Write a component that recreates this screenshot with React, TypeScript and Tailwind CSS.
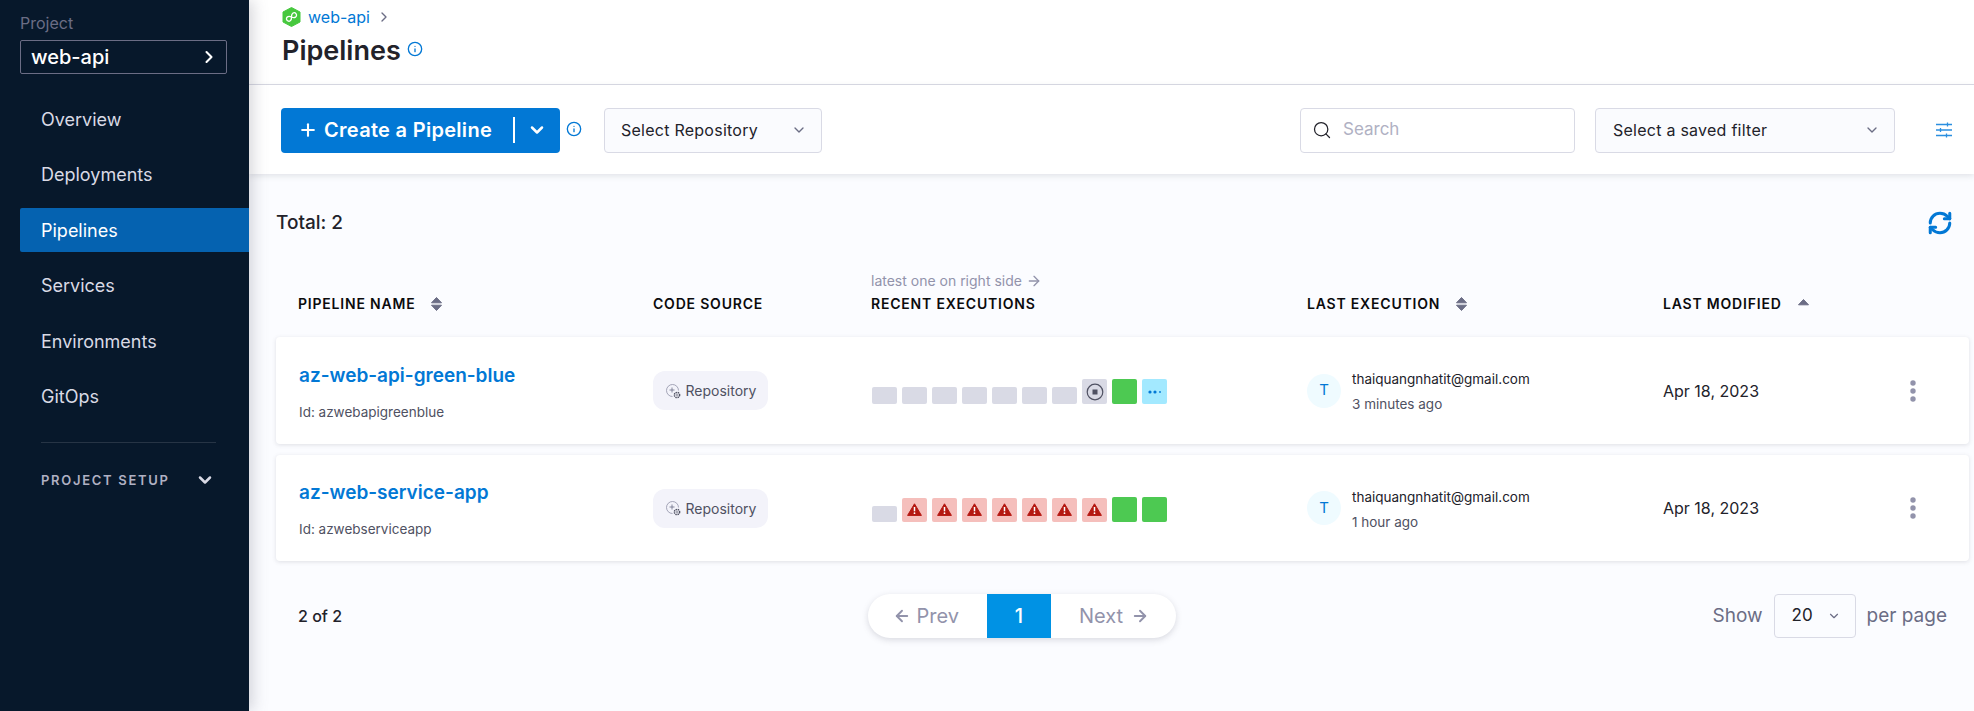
import { ArrowLeft, ArrowRight, ChevronDown, ChevronRight, Info, Plus, RefreshCw, Search } from "lucide-react";

const columns = "grid grid-cols-[377px_218px_436px_356px_238px_1fr] items-center";

const navItems = ["Overview", "Deployments", "Pipelines", "Services", "Environments", "GitOps"];

const SortIcon = ({ up = false }: { up?: boolean }) => (
  <svg width="13" height="16" viewBox="0 0 13 16" className={up ? "mt-[4px] shrink-0" : "shrink-0"}>
    <path d="M6.5 1.5 11.5 6.8H1.5Z" fill="#6b6d85" stroke="#6b6d85" strokeLinejoin="round" />
    {!up && <path d="M6.5 14.5 1.5 9.2H11.5Z" fill="#6b6d85" stroke="#6b6d85" strokeLinejoin="round" />}
  </svg>
);

const ProjectLogo = () => (
  <svg width="19" height="20" viewBox="0 0 19 20">
    <path d="M9.5 0.5 18 5v10l-8.5 4.5L1 15V5Z" fill="#47c83e" stroke="#47c83e" strokeLinejoin="round" />
    <path
      d="M9.5 10c-1-1.6-2-2.4-3.2-2.4a2.4 2.4 0 0 0 0 4.8c1.2 0 2.2-.8 3.2-2.4s2-2.4 3.2-2.4a2.4 2.4 0 0 1 0 4.8c-1.2 0-2.2-.8-3.2-2.4Z"
      fill="none"
      stroke="#fff"
      strokeWidth="1.3"
      transform="rotate(-35 9.5 10)"
    />
  </svg>
);

const RepoIcon = () => (
  <svg width="16" height="16" viewBox="0 0 16 16" className="shrink-0">
    <path d="M13.5 7.5A6 6 0 1 0 7.5 13.5" fill="none" stroke="#8f90a6" strokeWidth="0.8" />
    <path d="M7 4.5v5M4.5 7h5" stroke="#6b6d85" strokeWidth="0.8" />
    <circle cx="12" cy="12" r="2.6" fill="none" stroke="#4f5162" strokeWidth="1.5" strokeDasharray="1.4 0.7" />
    <circle cx="12" cy="12" r="0.8" fill="#4f5162" />
  </svg>
);

const FilterIcon = () => (
  <svg width="18" height="18" viewBox="0 0 18 18" stroke="#2b8fe0" strokeWidth="1.3">
    <path d="M1 3.5h16M1 9h16M1 14.5h16" />
    <path d="M12.5 1.5v4M5.5 7v4M11.5 12.5v4" />
  </svg>
);

const KebabIcon = () => (
  <svg width="6" height="22" viewBox="0 0 6 22" fill="#9293ab">
    <circle cx="3" cy="3" r="2.7" />
    <circle cx="3" cy="11" r="2.7" />
    <circle cx="3" cy="19" r="2.7" />
  </svg>
);

const WarnIcon = () => (
  <svg width="15" height="13" viewBox="0 0 15 13">
    <path d="M7.5 0.8 14.4 12.4H0.6Z" fill="#b41710" stroke="#b41710" strokeLinejoin="round" />
    <path d="M7.5 4v4.3" stroke="#fff" strokeWidth="1.5" />
    <circle cx="7.5" cy="10.2" r="0.9" fill="#fff" />
  </svg>
);

const Chip = ({ kind }: { kind: string }) => {
  if (kind === "empty") return <div className="h-[17px] w-[25px] rounded-[2px] bg-[#d9dae5]" />;
  if (kind === "stub") return <div className="h-[16px] w-[25px] rounded-[2px] bg-[#d9dae5]" />;
  if (kind === "ok") return <div className="h-[25px] w-[25px] rounded-[2px] bg-[#4dc952]" />;
  if (kind === "fail")
    return (
      <div className="flex h-[24px] w-[25px] items-center justify-center rounded-[2px] bg-[#f5bfbc]">
        <WarnIcon />
      </div>
    );
  if (kind === "stop")
    return (
      <div className="flex h-[25px] w-[25px] items-center justify-center rounded-[2px] bg-[#d9dae5]">
        <svg width="18" height="18" viewBox="0 0 18 18">
          <circle cx="9" cy="9" r="7.8" fill="none" stroke="#4f5162" strokeWidth="1.2" />
          <rect x="6.5" y="6.5" width="5" height="5" fill="#4f5162" />
        </svg>
      </div>
    );
  return (
    <div className="flex h-[25px] w-[25px] items-center justify-center rounded-[2px] bg-[#a3e9ff]">
      <svg width="14" height="6" viewBox="0 0 14 6" fill="#0278d5">
        <circle cx="2" cy="3" r="1.6" />
        <circle cx="7" cy="3" r="1.6" />
        <circle cx="12" cy="3" r="0.9" />
      </svg>
    </div>
  );
};

const Row = ({ name, id, time, chips, height }: { name: string; id: string; time: string; chips: string[]; height: string }) => (
  <div className={`${columns} ${height} rounded-[4px] bg-white shadow-[0_1px_4px_rgba(96,97,112,0.18)]`}>
    <div className="pt-[2px] pl-[23px]">
      <div className="text-[19px] leading-[24px] font-semibold text-[#0278d5]">{name}</div>
      <div className="mt-[16px] text-[13.5px] leading-[16px] text-[#4f5162]">Id: {id}</div>
    </div>
    <div>
      <div className="flex h-[39px] w-[115px] items-center justify-center gap-[5px] rounded-[12px] bg-[#f3f3fa] text-[14px] text-[#4f5162]">
        <RepoIcon />
        Repository
      </div>
    </div>
    <div className="flex items-end gap-[5px] pt-[2px] pl-[1px]">
      {chips.map((kind, index) => (
        <Chip kind={kind} key={index} />
      ))}
    </div>
    <div className="flex items-center gap-[11px]">
      <div className="flex h-[34px] w-[34px] items-center justify-center rounded-full bg-[#effbff] text-[15px] text-[#0278d5]">T</div>
      <div>
        <div className="text-[13.5px] leading-[20px] text-[#22222a]">thaiquangnhatit@gmail.com</div>
        <div className="mt-[7px] text-[13.5px] leading-[16px] text-[#4f5162]">{time}</div>
      </div>
    </div>
    <div className="text-[16px] text-[#22222a]">Apr 18, 2023</div>
    <div className="pl-[9px]">
      <KebabIcon />
    </div>
  </div>
);

export default function App() {
  return (
    <div className="flex h-[711px] overflow-hidden bg-[#fbfcff] font-['Inter',sans-serif]">
      <aside className="z-10 flex w-[249px] shrink-0 flex-col bg-[#07182b] shadow-[4px_0_14px_rgba(96,97,112,0.25)]">
        <div className="pt-[15px] pl-[20px] text-[16px] leading-[17px] text-[#6b6d85]">Project</div>
        <div className="mx-[20px] mt-[8px] flex h-[34px] w-[207px] items-center justify-between rounded-[2px] border border-[#6b6d85] pr-[7px] pl-[10px] text-[20px] font-medium text-white">
          web-api
          <ChevronRight size={20} strokeWidth={2.5} />
        </div>
        <nav className="mt-[23px] ml-[20px] flex flex-col gap-[11.5px]">
          {navItems.map((item) => (
            <div
              key={item}
              className={`flex h-[44px] items-center rounded-l-[2px] pl-[21px] text-[18px] ${item === "Pipelines" ? "bg-[#0562b0] text-white" : "text-[#d9dae5]"}`}
            >
              {item}
            </div>
          ))}
        </nav>
        <div className="mt-[23px] mr-[33px] ml-[41px] h-px bg-[#263445]" />
        <div className="mt-[27px] flex items-center justify-between pr-[34px] pl-[41px] text-[13px] leading-[16px] font-semibold tracking-[1.7px] text-[#b0b1c3]">
          PROJECT SETUP
          <ChevronDown size={20} strokeWidth={3} className="text-[#d9dae5]" />
        </div>
      </aside>

      <main className="flex min-w-0 flex-1 flex-col">
        <header className="h-[85px] border-b border-[#d9dae5] bg-white pl-[33px]">
          <div className="flex h-[32px] items-center gap-[7px] pt-[1px] text-[16px] text-[#0278d5]">
            <ProjectLogo />
            web-api
            <ChevronRight size={16} className="-ml-[1px] text-[#6b6d85]" />
          </div>
          <div className="mt-[1px] flex items-center gap-[6px]">
            <h1 className="text-[27px] leading-[36px] font-semibold text-[#22222a]">Pipelines</h1>
            <Info size={16} className="-mt-[4px] text-[#0278d5]" />
          </div>
        </header>

        <div className="z-[5] flex h-[89px] items-center bg-white pt-[1px] pr-[21px] pl-[32px] shadow-[0_2px_6px_rgba(96,97,112,0.16)]">
          <div className="flex h-[45px] w-[279px] items-center rounded-[4px] bg-[#0278d5] pl-[17px] text-[20px] font-semibold tracking-[0.3px] text-white">
            <Plus size={20} strokeWidth={2.5} />
            <span className="ml-[6px]">Create a Pipeline</span>
            <div className="ml-[21px] h-[26px] w-[2px] bg-white" />
            <ChevronDown size={20} strokeWidth={3} className="ml-[12px]" />
          </div>
          <Info size={16} className="-mt-[2px] ml-[6px] text-[#0278d5]" />
          <div className="ml-[22px] flex h-[45px] w-[218px] items-center justify-between rounded-[4px] border border-[#d9dae5] bg-[#fafbfe] pr-[14px] pl-[16px] text-[16px] tracking-[0.25px] text-[#22222a]">
            Select Repository
            <ChevronDown size={16} className="text-[#6b6d85]" />
          </div>
          <div className="ml-auto flex h-[45px] w-[275px] items-center gap-[11px] rounded-[4px] border border-[#d9dae5] pl-[11px] text-[17px] text-[#b0b1c3]">
            <Search size={20} strokeWidth={1.5} className="text-[#22222a]" />
            Search
          </div>
          <div className="ml-[20px] flex h-[45px] w-[300px] items-center justify-between rounded-[4px] border border-[#d9dae5] bg-[#fafbfe] pr-[14px] pl-[17px] text-[16px] tracking-[0.25px] text-[#22222a]">
            Select a saved filter
            <ChevronDown size={16} className="text-[#6b6d85]" />
          </div>
          <div className="ml-[40px]">
            <FilterIcon />
          </div>
        </div>

        <div className="flex-1 pt-[34px] pr-[5px] pl-[27px]">
          <div className="flex h-[30px] items-center justify-between pr-[16px]">
            <div className="text-[19px] font-medium text-[#22222a]">Total: 2</div>
            <RefreshCw size={26} strokeWidth={2.8} className="text-[#0278d5]" />
          </div>
          <div className={`${columns} mt-[30px] h-[50px] text-[14px] font-semibold tracking-[0.8px] text-[#0b0b0d]`}>
            <div className="flex items-center gap-[15px] pt-[21px] pl-[22px]">
              PIPELINE NAME
              <SortIcon />
            </div>
            <div className="pt-[21px]">CODE SOURCE</div>
            <div>
              <div className="flex items-center gap-[4px] text-[14px] leading-[16px] font-normal tracking-normal text-[#9293ab]">
                latest one on right side
                <ArrowRight size={16} />
              </div>
              <div className="mt-[6px] leading-[18px]">RECENT EXECUTIONS</div>
            </div>
            <div className="flex items-center gap-[15px] pt-[21px]">
              LAST EXECUTION
              <SortIcon />
            </div>
            <div className="flex items-center gap-[15px] pt-[21px]">
              LAST MODIFIED
              <SortIcon up />
            </div>
          </div>

          <div className="mt-[19px] flex flex-col gap-[11px]">
            <Row
              name="az-web-api-green-blue"
              id="azwebapigreenblue"
              time="3 minutes ago"
              height="h-[107px]"
              chips={["empty", "empty", "empty", "empty", "empty", "empty", "empty", "stop", "ok", "running"]}
            />
            <Row
              name="az-web-service-app"
              id="azwebserviceapp"
              time="1 hour ago"
              height="h-[106px]"
              chips={["stub", "fail", "fail", "fail", "fail", "fail", "fail", "fail", "ok", "ok"]}
            />
          </div>

          <div className="mt-[33px] grid h-[44px] grid-cols-[592px_308px_1fr] items-center pr-[22px]">
            <div className="pl-[22px] text-[16px] font-medium text-[#22222a]">2 of 2</div>
            <div className="flex h-[44px] items-center overflow-hidden rounded-full bg-white text-[20px] text-[#9293ab] shadow-[0_2px_6px_rgba(96,97,112,0.22)]">
              <div className="flex w-[119px] items-center justify-end gap-[6px] pr-[28px]">
                <ArrowLeft size={18} strokeWidth={2.5} />
                Prev
              </div>
              <div className="flex h-full w-[64px] items-center justify-center bg-[#0092e4] font-medium text-white">1</div>
              <div className="flex flex-1 items-center gap-[8px] pl-[28px]">
                Next
                <ArrowRight size={18} strokeWidth={2.5} />
              </div>
            </div>
            <div className="flex items-center justify-end text-[19px] text-[#6b6d85]">
              Show
              <div className="mx-[11px] flex h-[44px] w-[82px] items-center justify-between rounded-[4px] border border-[#d9dae5] pr-[14px] pl-[17px] text-[17px] text-[#22222a]">
                20
                <ChevronDown size={14} className="text-[#6b6d85]" />
              </div>
              per page
            </div>
          </div>
        </div>
      </main>
    </div>
  );
}
